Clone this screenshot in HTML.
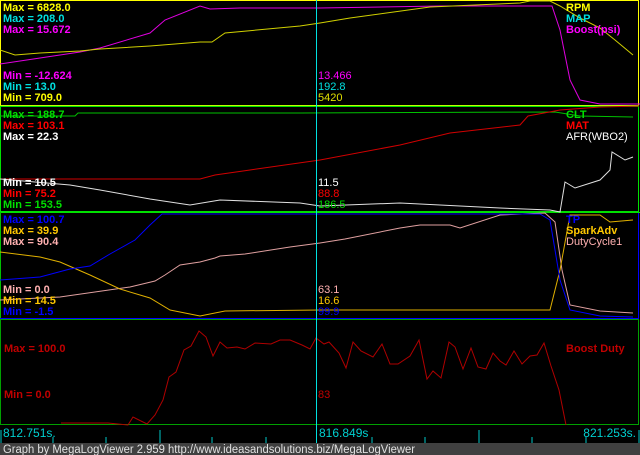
<!DOCTYPE html>
<html><head><meta charset="utf-8"><style>
html,body{margin:0;padding:0;background:#000;width:640px;height:455px;overflow:hidden}
svg{display:block}
text{font-family:"Liberation Sans",sans-serif;font-size:11px}
.b{font-weight:bold}
</style></head><body>
<svg width="640" height="455" viewBox="0 0 640 455" xmlns="http://www.w3.org/2000/svg">
<rect width="640" height="455" fill="#000"/>
<rect x="0.5" y="0.5" width="638" height="105" fill="none" stroke="#ffff00"/>
<rect x="0.5" y="106.5" width="638" height="105" fill="none" stroke="#00e000"/>
<line x1="0" y1="105.5" x2="639" y2="105.5" stroke="#c0ff00"/>
<rect x="0.5" y="212.5" width="638" height="106" fill="none" stroke="#0000ff"/>
<line x1="0" y1="212.5" x2="640" y2="212.5" stroke="#00e000"/>
<line x1="0.5" y1="212" x2="0.5" y2="318" stroke="#00c000"/>
<rect x="0.5" y="319.5" width="638" height="105" fill="none" stroke="#00a000"/>

<polyline fill="none" stroke="#e000e0" points="0,64 80,52 100,48 150,33 165,20 200,6 210,9 240,8 320,8 440,6 552,6 560,30 570,80 580,100 600,104 640,104"/>
<polyline fill="none" stroke="#d0d000" points="0,50 15,55 40,53 80,51 100,49 150,46 200,42 212,42 225,33 300,26 320,23 350,18 430,7 520,3 530,1 550,1 560,6 580,18 600,28 615,40 633,55"/>
<polyline fill="none" stroke="#00c000" points="0,116 75,116 78,113 300,113 555,112 580,116 633,117"/>
<polyline fill="none" stroke="#d00000" points="0,179 200,179 215,175 250,170 320,160 400,145 450,133 520,125 528,116 560,110 600,107 639,106"/>
<polyline fill="none" stroke="#e0e0e0" points="0,179 70,185 100,190 150,199 190,205 220,200 300,203 320,206 400,203 500,208 550,210 560,212 565,182 575,188 600,180 610,170 612,152 625,160 633,157"/>
<polyline fill="none" stroke="#e0a0a0" points="0,300 60,297 130,287 155,281 165,275 180,265 200,262 215,258 220,256 245,254 290,247 320,243 345,239 400,228 420,225 450,225 460,228 500,215 545,213 555,222 562,270 570,305 600,311 633,313"/>
<polyline fill="none" stroke="#e0b000" points="0,252 40,257 60,262 90,275 120,289 150,298 170,310 200,316 225,311 320,310 550,310 560,270 570,215 600,215 610,222 633,220"/>
<polyline fill="none" stroke="#0000ff" points="0,280 40,277 70,269 90,266 110,254 135,240 150,225 162,214 540,214 550,220 560,280 570,310 600,316 633,317"/>
<polyline fill="none" stroke="#b00000" points="61,423 69,423 92,423 108,423 128,425 133,417 147,424 155,415 163,400 169,377 176,372 184,350 191,346 199,331 206,337 213,356 220,342 227,348 237,347 245,349 255,343 271,344 280,340 290,340 302,345 310,349 316,338 324,344 329,342 339,353 346,368 353,342 361,351 373,357 382,344 390,364 398,364 410,356 419,340 427,379 433,371 441,378 449,342 455,347 463,369 471,348 478,367 486,369 493,353 500,361 506,365 514,351 522,364 530,356 537,355 544,343 551,366 559,390 566,425"/>

<line x1="316.5" y1="0" x2="316.5" y2="443" stroke="#00e0e0"/>

<text class="b" x="3" y="11" fill="#ffff00">Max = 6828.0</text>
<text class="b" x="3" y="22" fill="#00e0e0">Max = 208.0</text>
<text class="b" x="3" y="33" fill="#ff00ff">Max = 15.672</text>
<text class="b" x="3" y="79" fill="#ff00ff">Min = -12.624</text>
<text class="b" x="3" y="90" fill="#00e0e0">Min = 13.0</text>
<text class="b" x="3" y="101" fill="#ffff00">Min = 709.0</text>
<text x="318" y="79" fill="#ff00ff">13.466</text>
<text x="318" y="90" fill="#00e0e0">192.8</text>
<text x="318" y="101" fill="#e0e000">5420</text>
<text class="b" x="566" y="11" fill="#ffff00">RPM</text>
<text class="b" x="566" y="22" fill="#00e0e0">MAP</text>
<text class="b" x="566" y="33" fill="#ff00ff">Boost(psi)</text>
<text class="b" x="3" y="118" fill="#00e000">Max = 188.7</text>
<text class="b" x="3" y="129" fill="#ff0000">Max = 103.1</text>
<text class="b" x="3" y="140" fill="#ffffff">Max = 22.3</text>
<text class="b" x="3" y="186" fill="#ffffff">Min = 10.5</text>
<text class="b" x="3" y="197" fill="#ff0000">Min = 75.2</text>
<text class="b" x="3" y="208" fill="#00e000">Min = 153.5</text>
<text x="318" y="186" fill="#ffffff">11.5</text>
<text x="318" y="197" fill="#ff0000">88.8</text>
<text x="318" y="208" fill="#00e000">186.5</text>
<text class="b" x="566" y="118" fill="#00e000">CLT</text>
<text class="b" x="566" y="129" fill="#ff0000">MAT</text>
<text x="566" y="140" fill="#ffffff">AFR(WBO2)</text>
<text class="b" x="3" y="223" fill="#0000ff">Max = 100.7</text>
<text class="b" x="3" y="234" fill="#ffc800">Max = 39.9</text>
<text class="b" x="3" y="245" fill="#ffb0b0">Max = 90.4</text>
<text class="b" x="3" y="293" fill="#ffb0b0">Min = 0.0</text>
<text class="b" x="3" y="304" fill="#ffc800">Min = 14.5</text>
<text class="b" x="3" y="315" fill="#0000ff">Min = -1.5</text>
<text x="318" y="293" fill="#ffb0b0">63.1</text>
<text x="318" y="304" fill="#ffc800">16.6</text>
<text x="318" y="315" fill="#0000ff">99.9</text>
<text class="b" x="566" y="223" fill="#0000ff">TP</text>
<text class="b" x="566" y="234" fill="#ffc800">SparkAdv</text>
<text x="566" y="245" fill="#ffb0b0">DutyCycle1</text>
<text class="b" x="4" y="352" fill="#c00000">Max = 100.0</text>
<text class="b" x="4" y="398" fill="#c00000">Min = 0.0</text>
<text x="318" y="398" fill="#c00000">83</text>
<text class="b" x="566" y="352" fill="#c00000">Boost Duty</text>

<g stroke="#00c8c8" stroke-width="1">
<line x1="1" y1="430" x2="1" y2="443"/><line x1="160" y1="430" x2="160" y2="443"/>
<line x1="479" y1="430" x2="479" y2="443"/><line x1="639" y1="430" x2="639" y2="443"/>
<line x1="53" y1="437" x2="53" y2="443"/><line x1="106" y1="437" x2="106" y2="443"/>
<line x1="212" y1="437" x2="212" y2="443"/><line x1="266" y1="437" x2="266" y2="443"/>
<line x1="372" y1="437" x2="372" y2="443"/><line x1="425" y1="437" x2="425" y2="443"/>
<line x1="532" y1="437" x2="532" y2="443"/><line x1="586" y1="437" x2="586" y2="443"/>
</g>
<text x="3" y="437" fill="#00d0d0" style="font-size:12px">812.751s.</text>
<text x="319" y="437" fill="#00d0d0" style="font-size:12px">816.849s</text>
<text x="636" y="437" fill="#00d0d0" text-anchor="end" style="font-size:12px">821.253s.</text>
<rect x="0" y="443" width="640" height="12" fill="#404040"/>
<text x="3" y="453" fill="#e0e0e0" style="font-size:11.5px" textLength="412" lengthAdjust="spacingAndGlyphs">Graph by MegaLogViewer 2.959 http://www.ideasandsolutions.biz/MegaLogViewer</text>
</svg>
</body></html>
